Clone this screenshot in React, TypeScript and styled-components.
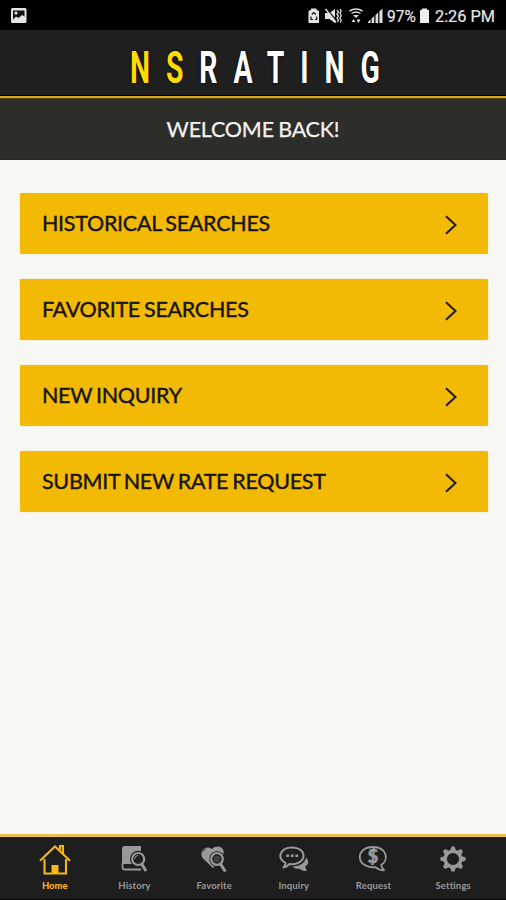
import React from "react";
import styled, { createGlobalStyle } from "styled-components";

const GlobalStyle = createGlobalStyle`
  * { box-sizing: border-box; }
  body { margin: 0; background: #f7f8f4; }
`;

const Screen = styled.div`
  width: 506px;
  height: 900px;
  display: flex;
  flex-direction: column;
  overflow: hidden;
  background: #f7f8f4;
  font-family: Lato, sans-serif;
`;

const StatusBar = styled.div`
  height: 30px;
  flex: none;
  display: flex;
  align-items: center;
  padding: 2px 11px 0 10px;
  background: #000;
  color: #e8e8e8;
  font: 400 17px/28px Roboto, sans-serif;
  svg { display: block; flex: none; }
`;

const StatusIcons = styled.div`
  display: flex;
  align-items: center;
  margin-left: auto;
`;

const StatusText = styled.span<{ $width: number; $left?: number; $squeeze: number }>`
  display: block;
  width: ${(p) => p.$width}px;
  margin-left: ${(p) => p.$left ?? 0}px;
  white-space: nowrap;
  transform: scaleX(${(p) => p.$squeeze});
  transform-origin: left;
  -webkit-text-stroke: 0.2px #e8e8e8;
`;

const Header = styled.header`
  height: 66px;
  flex: none;
  display: flex;
  justify-content: flex-start;
  padding-left: 129.5px;
  background: #1f1f1f;
  border-bottom: 1px solid #000;
`;

const Logo = styled.h1`
  margin: 0;
  padding-top: 8px;
  font: 700 45px/60px Roboto, sans-serif;
  letter-spacing: 25.3px;
  white-space: nowrap;
  color: #fff;
  transform: scaleX(0.63);
  transform-origin: left;
  text-shadow: 0 0 3px #000;
`;

const LogoAccent = styled.span`
  color: #ffdc00;
`;

const Welcome = styled.div`
  height: 64px;
  flex: none;
  border-top: 2px solid #dba51c;
  border-bottom: 1px solid #252521;
  box-shadow: inset 0 1px 0 #51431b;
  background: #2d2d29;
  color: #f2f2f2;
  text-align: center;
  font-size: 21.5px;
  line-height: 62px;
  letter-spacing: -0.2px;
  word-spacing: -1px;
  -webkit-text-stroke: 0.25px #f2f2f2;
`;

const Menu = styled.main`
  flex: 1;
  display: flex;
  flex-direction: column;
  gap: 25.1px;
  padding: 32.6px 18.5px 0 20.4px;
`;

const MenuButton = styled.button`
  height: 61px;
  flex: none;
  display: flex;
  align-items: center;
  justify-content: space-between;
  border: 0;
  border-radius: 2px;
  padding: 0 29.5px 0 21.6px;
  background: #f2b905;
  color: #17140a;
  font: 400 21.5px/61px Lato, sans-serif;
  letter-spacing: -0.28px;
  word-spacing: -1.2px;
  -webkit-text-stroke: 0.4px #17140a;
  box-shadow: 0 0 1px #f2b905;
  svg { margin-top: 3px; }
`;

const TabBar = styled.nav`
  height: 66px;
  flex: none;
  display: grid;
  grid-template-columns: repeat(6, 1fr);
  padding: 0 13px 0 15px;
  border-top: 3px solid #e9c052;
  border-bottom: 1px solid #080808;
  box-shadow: inset 0 1px 0 #2e2204;
  background: #1e1e1e;
`;

const Tab = styled.a<{ $active?: boolean }>`
  display: flex;
  flex-direction: column;
  align-items: center;
  padding-top: 6px;
  color: ${(p) => (p.$active ? "#f5b51b" : "#999")};
  font-size: 9.5px;
  font-weight: ${(p) => (p.$active ? 900 : 700)};
  line-height: 12px;
  letter-spacing: ${(p) => (p.$active ? 0 : 0.15)}px;
  svg { display: block; margin-bottom: 5px; }
`;

const Chevron = () => (
  <svg width="14" height="20" viewBox="0 0 14 20" fill="none" stroke="#211b07" strokeWidth="2">
    <path d="M2 1.3 L11.5 10 L2 18.7" />
  </svg>
);

const HomeIcon = () => (
  <svg width="32" height="32" viewBox="0 0 32 32" fill="none" stroke="currentColor" strokeWidth="2.1">
    <path d="M1 17.8 L16 3.5 L31 17.8" />
    <path d="M5.5 16 V30.5 H27 V16" />
    <path d="M21 7 V3 H24 V11" />
    <path d="M12.5 31 V22 H19.5 V31 Z" fill="currentColor" stroke="none" />
  </svg>
);

const HistoryIcon = () => (
  <svg width="32" height="32" viewBox="0 0 32 32" fill="none" stroke="currentColor">
    <path d="M4 6 Q4 3 7 3 H23 V21 H4 Z" fill="currentColor" stroke="none" />
    <path d="M4.5 20 V24 Q4.5 26.5 7 26.5 H23" strokeWidth="1.8" />
    <circle cx="20.2" cy="16" r="8.2" fill="#1e1e1e" stroke="none" />
    <circle cx="20.2" cy="16" r="6" strokeWidth="2.2" />
    <path d="M16.6 16 Q16.8 12.6 20.2 12.4" strokeWidth="1" />
    <path d="M23.7 21 L28 28" strokeWidth="3" />
  </svg>
);

const FavoriteIcon = () => (
  <svg width="32" height="32" viewBox="0 0 32 32" fill="none" stroke="currentColor">
    <path d="M15 25 L5 15.5 C0 8.5 8 1 14 6 C19 1 27 4 25.5 11 L23 17 Z" fill="currentColor" stroke="none" />
    <circle cx="19" cy="16" r="7.7" fill="#1e1e1e" stroke="none" />
    <circle cx="19" cy="16" r="5.8" strokeWidth="2.2" />
    <circle cx="19" cy="16" r="3.2" fill="currentColor" stroke="none" opacity="0.3" />
    <path d="M22.5 21 L27.3 28.5" strokeWidth="3" />
    <path d="M5 8.5 Q5.5 6.5 8 5.8" stroke="#1e1e1e" strokeWidth="0.8" />
  </svg>
);

const InquiryIcon = () => (
  <svg width="32" height="32" viewBox="0 0 32 32" fill="none" stroke="currentColor" strokeWidth="2" strokeLinejoin="round">
    <path d="M28 14.5 C32 19 30 22 27 23.5 L29 27.8 C25.5 28.3 23 27 21.5 25.7 C18.5 26.2 16 25 14.5 23.5 C22 23.5 27 20 28 14.5Z" fill="currentColor" stroke="none" />
    <path d="M7.5 19.8 C-1.5 15 2 4.4 14 4.4 C21 4.4 25.5 8 25.5 12.8 C25.5 18.5 18.5 22 11.5 21 C9.8 23 7.8 24.3 5.5 24.5 C7 23 7.5 21.5 7.5 19.8Z" fill="#1e1e1e" />
    <path d="M8.2 12.8 h2.8 M12.8 12.8 h2.8 M17.4 12.8 h2.8" strokeWidth="2.4" />
  </svg>
);

const Dollar = styled.text`
  font: 900 18px Lato, sans-serif;
  fill: currentColor;
  stroke: currentColor;
  stroke-width: 0.6px;
`;

const RequestIcon = () => (
  <svg width="32" height="32" viewBox="0 0 32 32" fill="none" stroke="currentColor" strokeWidth="1.8" strokeLinejoin="round">
    <path d="M24.3 22 C32.5 17 29.5 4 16.2 4 C7.5 4 2.8 8.8 2.8 14 C2.8 21 10.5 25.2 18.5 24.2 C21 26.5 23.7 27.5 27 27.3 C25.2 25.5 24.5 24 24.3 22Z" />
    <Dollar x="16" y="20.4" textAnchor="middle">$</Dollar>
  </svg>
);

const teeth = [0, 45, 90, 135, 180, 225, 270, 315];

const SettingsIcon = () => (
  <svg width="32" height="32" viewBox="0 0 32 32" fill="currentColor">
    {teeth.map((angle) => (
      <path key={angle} d="M12.6 9 L14.5 3.4 H17.5 L19.4 9 Z" transform={`rotate(${angle} 16 16)`} />
    ))}
    <circle cx="16" cy="16" r="7.8" fill="none" stroke="currentColor" strokeWidth="3.4" />
  </svg>
);

const PictureIcon = () => (
  <svg width="17" height="16" viewBox="0 0 17 16">
    <rect x="1" y="0" width="15.5" height="15" rx="1.5" fill="#e4e4e4" />
    <path d="M3 2.5 H14.5 V8.5 L12 7 L8.5 10 L6 8.5 L3 11.5 Z" fill="#111" />
    <circle cx="6" cy="5" r="1.6" fill="#e4e4e4" />
  </svg>
);

const RecycleBatteryIcon = () => (
  <svg width="12" height="16" viewBox="0 0 12 16">
    <path d="M0.5 3.5 Q0.5 2 3 2 V0.5 H8.5 V2 Q11 2 11 3.5 V15 H0.5 Z" fill="#e4e4e4" />
    <path d="M3.8 6.5 L5.8 4.5 L7.8 6.5 M3 8.5 V11.5 H5 M8.7 8.5 V11.5 H7" stroke="#111" strokeWidth="1.2" fill="none" />
  </svg>
);

const MuteIcon = () => (
  <svg width="18" height="16" viewBox="0 0 18 16">
    <path d="M0 5 H4.5 L10 1 V15 L4.5 11 H0 Z" fill="#e4e4e4" />
    <path d="M2 1.5 L11 12" stroke="#000" strokeWidth="1.2" />
    <path d="M0.5 1 L11 14.5" stroke="#e4e4e4" strokeWidth="1.5" />
    <path d="M12 2 l1.5 2 -1.5 2 1.5 2 -1.5 2 1.5 2 -1 2 M15 1 l1.2 2 -1.2 2 1.2 2.5 -1.2 2.5 1.2 2.5 -1 2" stroke="#ddd" strokeWidth="1.3" fill="none" />
  </svg>
);

const WifiIcon = () => (
  <svg width="15" height="16" viewBox="0 0 15 16" fill="none" stroke="#ddd">
    <path d="M0.5 3 Q7 -1 13.5 3 M2.5 5.5 Q7 2.5 11.5 5.5" strokeWidth="1.5" />
    <path d="M4 7 H10 L7 10 Z" fill="#ddd" stroke="none" />
    <path d="M2.5 14 L4.5 11 L6.5 14 Z M7.5 11.5 L11.5 11.5 L9.5 15 Z" fill="#ddd" stroke="none" />
  </svg>
);

const SignalIcon = () => (
  <svg width="16" height="16" viewBox="0 0 16 16" fill="#ddd">
    <path d="M-1 15 L2.5 11.5 V15 Z M3.6 10.5 L6.2 8 V15 H3.6 Z M7.5 7 L10.2 4.5 V15 H7.5 Z" />
    <path d="M11.4 3.5 L14.5 0.5 V15 H11.4 Z" />
  </svg>
);

const BatteryIcon = () => (
  <svg width="10" height="16" viewBox="0 0 10 16">
    <path d="M0 2.5 Q0 1.8 2 1.8 V0.5 H7 V1.8 Q9 1.8 9 2.5 V15 H0 Z" fill="#eee" />
  </svg>
);

const Gap = styled.span<{ $size: number }>`
  width: ${(p) => p.$size}px;
`;

const menuItems = ["HISTORICAL SEARCHES", "FAVORITE SEARCHES", "NEW INQUIRY", "SUBMIT NEW RATE REQUEST"];

const tabs = [
  { label: "Home", Icon: HomeIcon },
  { label: "History", Icon: HistoryIcon },
  { label: "Favorite", Icon: FavoriteIcon },
  { label: "Inquiry", Icon: InquiryIcon },
  { label: "Request", Icon: RequestIcon },
  { label: "Settings", Icon: SettingsIcon },
];

export default function App() {
  return (
    <Screen>
      <GlobalStyle />
      <StatusBar>
        <PictureIcon />
        <StatusIcons>
          <RecycleBatteryIcon />
          <Gap $size={5} />
          <MuteIcon />
          <Gap $size={6} />
          <WifiIcon />
          <Gap $size={4} />
          <SignalIcon />
          <StatusText $width={31} $left={3} $squeeze={0.91}>97%</StatusText>
          <Gap $size={2} />
          <BatteryIcon />
          <StatusText $width={60} $left={5} $squeeze={0.96}>2:26 PM</StatusText>
        </StatusIcons>
      </StatusBar>
      <Header>
        <Logo>
          <LogoAccent>NS</LogoAccent>RATING
        </Logo>
      </Header>
      <Welcome>WELCOME BACK!</Welcome>
      <Menu>
        {menuItems.map((label) => (
          <MenuButton key={label}>
            {label}
            <Chevron />
          </MenuButton>
        ))}
      </Menu>
      <TabBar>
        {tabs.map(({ label, Icon }, index) => (
          <Tab key={label} $active={index === 0}>
            <Icon />
            {label}
          </Tab>
        ))}
      </TabBar>
    </Screen>
  );
}
